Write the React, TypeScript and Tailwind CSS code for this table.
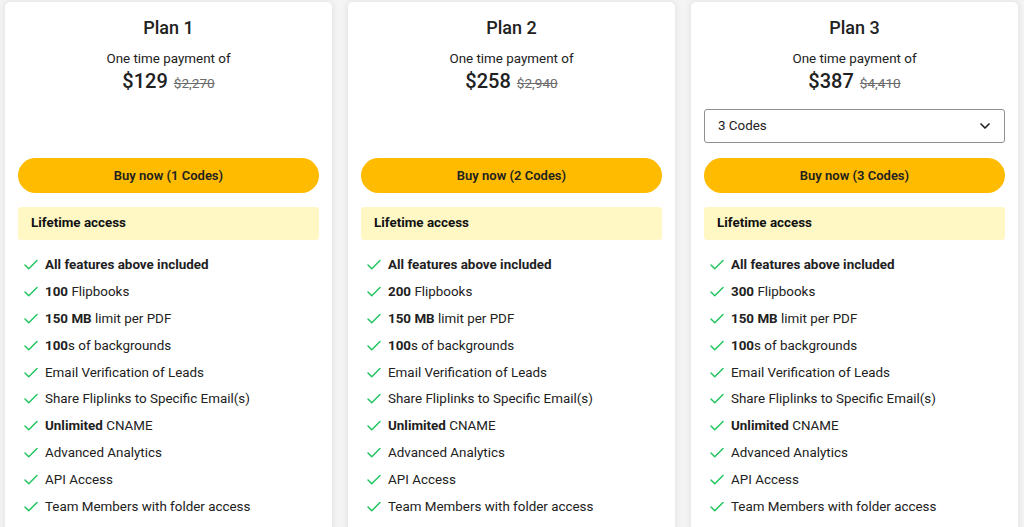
import { Check, ChevronDown } from 'lucide-react'

type Feature = { bold?: string; text?: string }

const plans = [
  { name: 'Plan 1', price: '$129', was: '$2,270', codes: 1, flipbooks: '100', select: false },
  { name: 'Plan 2', price: '$258', was: '$2,940', codes: 2, flipbooks: '200', select: false },
  { name: 'Plan 3', price: '$387', was: '$4,410', codes: 3, flipbooks: '300', select: true },
]

function features(flipbooks: string): Feature[] {
  return [
    { bold: 'All features above included' },
    { bold: flipbooks, text: ' Flipbooks' },
    { bold: '150 MB', text: ' limit per PDF' },
    { bold: '100', text: 's of backgrounds' },
    { text: 'Email Verification of Leads' },
    { text: 'Share Fliplinks to Specific Email(s)' },
    { bold: 'Unlimited', text: ' CNAME' },
    { text: 'Advanced Analytics' },
    { text: 'API Access' },
    { text: 'Team Members with folder access' },
  ]
}

function PlanCard({ plan }: { plan: (typeof plans)[number] }) {
  return (
    <article className="w-[329px] h-[540px] bg-white rounded-md border border-[#ebebeb] shadow-[0_0_6px_rgba(0,0,0,0.08)] px-[13px] pt-3">
      <h3 className="text-center text-[18px] leading-[28px] font-medium text-[#212121]">{plan.name}</h3>
      <p className="mt-[7px] text-center text-[13.4px] leading-[20px] text-[#212121]">One time payment of</p>
      <div className="-mt-[2px] flex items-baseline justify-center gap-[6px] text-[#212121]">
        <span className="text-[20px] leading-[28px] font-medium">{plan.price}</span>
        <span className="text-[13.6px] text-[#6b6b6b] line-through">{plan.was}</span>
      </div>

      {plan.select ? (
        <div className="mt-[14px] h-[34px] flex items-center justify-between border border-[#8f8f8f] rounded-[3px] pl-[13px] pr-[11px]">
          <span className="text-[13.4px] text-[#212121]">3 Codes</span>
          <ChevronDown size={16} strokeWidth={2.5} className="text-[#212121]" />
        </div>
      ) : (
        <div className="mt-[14px] h-[34px]" />
      )}

      <button className="mt-[15px] w-full h-[35px] rounded-full bg-[#ffbb00] text-[13px] font-semibold text-[#212121]">
        Buy now ({plan.codes} Codes)
      </button>

      <div className="mt-[14px] h-[33px] flex items-center rounded-[3px] bg-[#fff8c5] px-[13px]">
        <span className="text-[13.4px] font-bold text-[#111]">Lifetime access</span>
      </div>

      <ul className="mt-[12px] pl-[4px]">
        {features(plan.flipbooks).map((f, i) => (
          <li key={i} className="flex items-center gap-[5px] h-[26.8px] text-[13.4px] text-[#212121]">
            <Check size={18} strokeWidth={2} className="text-[#22c55e] shrink-0" />
            <span>
              {f.bold && <b className="font-bold">{f.bold}</b>}
              {f.text}
            </span>
          </li>
        ))}
      </ul>
    </article>
  )
}

export default function App() {
  return (
    <div className="w-[1024px] h-[527px] overflow-hidden bg-[#f4f4f4] font-['Roboto',sans-serif]">
      <div className="flex gap-[14px] pl-[4px] pt-[1px]">
        {plans.map(p => (
          <PlanCard key={p.name} plan={p} />
        ))}
      </div>
    </div>
  )
}
